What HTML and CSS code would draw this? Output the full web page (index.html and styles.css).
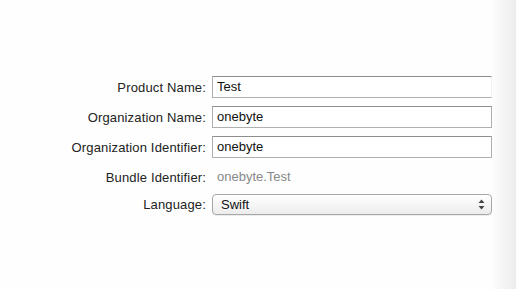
FILE: index.html
```html
<!DOCTYPE html>
<html lang="en">
<head>
  <meta charset="UTF-8" />
  <meta name="viewport" content="width=device-width, initial-scale=1.0" />
  <title>New Project Options</title>
  <link rel="stylesheet" href="styles.css">
</head>
<body>
  <div class="sheet">
    <div class="form">
      <label class="label">Product Name:</label>
      <div class="field field-open">Test</div>

      <label class="label">Organization Name:</label>
      <div class="field">onebyte</div>

      <label class="label">Organization Identifier:</label>
      <div class="field">onebyte</div>

      <label class="label">Bundle Identifier:</label>
      <div class="value">onebyte.Test</div>

      <label class="label label-short">Language:</label>
      <div class="popup">
        <span>Swift</span>
        <svg class="arrows" width="7" height="11" viewBox="0 0 7 11">
          <path d="M3.5 0.5 L6.5 4 L0.5 4 Z" fill="#444" />
          <path d="M3.5 10.5 L6.5 7 L0.5 7 Z" fill="#444" />
        </svg>
      </div>
    </div>
    <div class="edge"></div>
  </div>
</body>
</html>
```

FILE: styles.css
```css
body { margin: 0; background: #fefefe; font-family: "Liberation Sans", Arial, sans-serif; font-size: 13px; color: #222; }
.sheet { display: flex; height: 289px; }
.form { flex: 1; display: grid; grid-template-columns: 206px 280px; column-gap: 6px; row-gap: 8px; align-content: start; align-items: center; padding-top: 76px; }
.label { text-align: right; white-space: nowrap; letter-spacing: 0.15px; }
.field { height: 20px; line-height: 20px; padding: 0 4px; border: 1px solid #b0b0b0; border-top-color: #8e8e8e; background: #fff; color: #111; }
.field-open { border-right-color: #f2f2f2; }
.value { height: 22px; line-height: 22px; padding-left: 5px; color: #888; }
.popup { height: 19px; margin-top: -2px; display: flex; align-items: center; justify-content: space-between; padding: 0 6px 0 8px; border: 1px solid #a8a8a8; border-radius: 4px; background: linear-gradient(#ffffff, #ececec); box-shadow: 0 1px 1px rgba(0,0,0,0.08); color: #111; }
.label-short { margin-top: -2px; }
.arrows { display: block; }
.edge { width: 26px; background: linear-gradient(to right, #fdfdfd, #ececec); }
```
